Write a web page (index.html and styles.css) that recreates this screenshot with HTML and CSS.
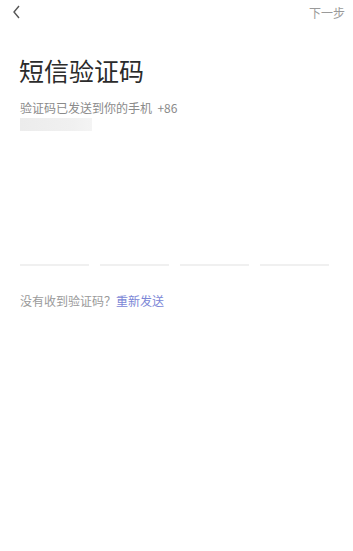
FILE: index.html
```html
<!DOCTYPE html>
<html lang="zh-CN">
<head>
    <meta charset="UTF-8">
    <meta name="viewport" content="width=device-width, initial-scale=1.0">
    <title>短信验证码</title>
    <link rel="stylesheet" href="styles.css">
</head>
<body>
    <div class="top-bar">
        <span class="back">
            <svg width="10" height="14" viewBox="0 0 10 14"><polyline points="7,1 2,7 7,13" fill="none" stroke="#555" stroke-width="1.4"/></svg>
        </span>
        <span class="next">下一步</span>
    </div>

    <div class="content">
        <h1 class="title">短信验证码</h1>
        <p class="sent">验证码已发送到你的手机&nbsp;&nbsp;+86</p>
        <div class="phone-blur"></div>

        <div class="code-inputs">
            <div class="code-line"></div>
            <div class="code-line"></div>
            <div class="code-line"></div>
            <div class="code-line"></div>
        </div>

        <p class="resend">没有收到验证码？<span class="resend-link">重新发送</span></p>
    </div>
</body>
</html>
```

FILE: styles.css
```css
body {
    margin: 0;
    padding: 0;
    background-color: #fff;
    font-family: "Noto Sans CJK SC", "Noto Sans", sans-serif;
    color: #333;
}
.top-bar {
    display: flex;
    justify-content: space-between;
    align-items: center;
    height: 22px;
    padding: 1px 8px 0 12px;
}
.back {
    display: flex;
    align-items: center;
}
.next {
    font-size: 12px;
    color: #9a9a9a;
}
.content {
    padding: 0 25px 0 20px;
}
.title {
    margin: 29px 0 0 -1px;
    font-size: 25px;
    font-weight: normal;
    line-height: 36px;
    color: #2b2b2b;
}
.sent {
    margin: 12px 0 0;
    font-size: 12px;
    line-height: 16px;
    color: #8a8a8a;
}
.phone-blur {
    width: 72px;
    height: 13px;
    margin-top: 2px;
    background: linear-gradient(to right, #ececec, #f0f0f0 70%, #f4f4f4);
}
.code-inputs {
    display: flex;
    gap: 11px;
    margin-top: 133px;
    width: 309px;
}
.code-line {
    flex: 1;
    height: 2px;
    background-color: #f0f0f0;
}
.resend {
    margin: 27px 0 0;
    font-size: 12px;
    line-height: 16px;
    color: #9a9a9a;
}
.resend-link {
    color: #7b86d6;
}
```
